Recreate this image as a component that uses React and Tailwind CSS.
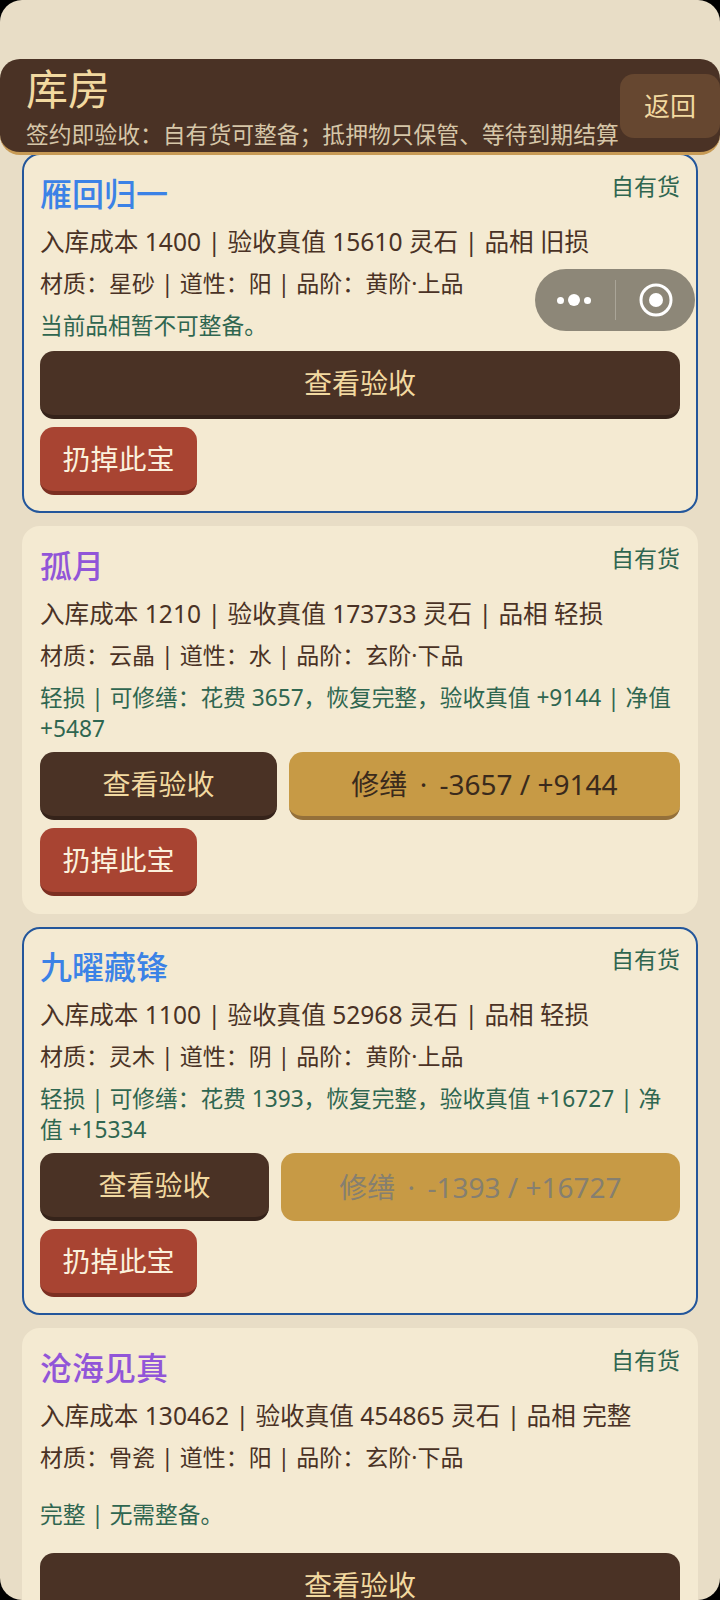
const FONT = "font-['Noto_Sans','Noto_Sans_CJK_SC',sans-serif]";

const items = [
  {
    name: "雁回归一",
    nameColor: "text-[#3b82e6]",
    selected: true,
    info: "入库成本 1400 | 验收真值 15610 灵石 | 品相 旧损",
    attrs: "材质：星砂 | 道性：阳 | 品阶：黄阶·上品",
    note: "当前品相暂不可整备。",
    noteBox: "min-h-[33px]",
  },
  {
    name: "孤月",
    nameColor: "text-[#9155d8]",
    info: "入库成本 1210 | 验收真值 173733 灵石 | 品相 轻损",
    attrs: "材质：云晶 | 道性：水 | 品阶：玄阶·下品",
    note: "轻损 | 可修缮：花费 3657，恢复完整，验收真值 +9144 | 净值 +5487",
    repair: "-3657 / +9144",
  },
  {
    name: "九曜藏锋",
    nameColor: "text-[#3b82e6]",
    selected: true,
    info: "入库成本 1100 | 验收真值 52968 灵石 | 品相 轻损",
    attrs: "材质：灵木 | 道性：阴 | 品阶：黄阶·上品",
    note: "轻损 | 可修缮：花费 1393，恢复完整，验收真值 +16727 | 净值 +15334",
    repair: "-1393 / +16727",
    repairDisabled: true,
  },
  {
    name: "沧海见真",
    nameColor: "text-[#9155d8]",
    info: "入库成本 130462 | 验收真值 454865 灵石 | 品相 完整",
    attrs: "材质：骨瓷 | 道性：阳 | 品阶：玄阶·下品",
    note: "完整 | 无需整备。",
    noteBox: "flex min-h-[61px] items-center",
    noDiscard: true,
  },
];

function ItemCard({ item }) {
  return (
    <div
      className={`rounded-[18px] border-2 bg-[#f4ead2] px-[16px] pt-[14px] pb-[16px] first:pt-[15px] ${
        item.selected ? "border-[#23569b]" : "border-[#f4ead2]"
      }`}
    >
      <div className="flex items-start justify-between">
        <div className={`text-[32px] font-medium leading-[48px] ${item.nameColor}`}>{item.name}</div>
        <div className="-mt-[2px] text-[23px] leading-[36px] text-[#2f6650]">自有货</div>
      </div>
      <div className="mt-[6px] text-[24.6px] leading-[36px] text-[#4a3225]">{item.info}</div>
      <div className="mt-[6px] text-[23px] leading-[34px] text-[#4a3225]">{item.attrs}</div>
      <div className={`mt-[10px] text-[22.7px] leading-[31px] text-[#2f6650] ${item.noteBox || ""}`}>
        {item.note}
      </div>
      <div className="mt-[8px] flex gap-[12px]">
        <button className="h-[68px] flex-auto whitespace-nowrap rounded-[14px] border-b-[4px] border-[#35231a] bg-[#4a3225] px-[16px] text-[28px] text-[#f2d9a0]">
          查看验收
        </button>
        {item.repair && (
          <button
            className={`h-[68px] flex-auto whitespace-nowrap rounded-[14px] bg-[#c79a45] px-[16px] text-[28px] ${
              item.repairDisabled
                ? "text-[#857f70]"
                : "border-b-[4px] border-[#94703a] text-[#3a2a1c]"
            }`}
          >
            修缮 <span className="mx-[5px]">·</span> {item.repair}
          </button>
        )}
      </div>
      {!item.noDiscard && (
        <button className="mt-[8px] block h-[68px] w-[157px] rounded-[14px] border-b-[4px] border-[#7c2f22] bg-[#a84432] text-[28px] text-[#fbf1dc]">
          扔掉此宝
        </button>
      )}
    </div>
  );
}

function Capsule() {
  return (
    <div className="absolute left-[535px] top-[269px] z-20 flex h-[62px] w-[160px] items-center rounded-full bg-[#8d8778]">
      <div className="flex w-[80px] items-center justify-center gap-[4px] pr-[3px]">
        <span className="h-[7px] w-[7px] rounded-full bg-white" />
        <span className="h-[12px] w-[12px] rounded-full bg-white" />
        <span className="h-[7px] w-[7px] rounded-full bg-white" />
      </div>
      <div className="h-[40px] w-px bg-[#aaa598]" />
      <div className="flex flex-1 items-center justify-center">
        <svg width="34" height="34" viewBox="0 0 34 34">
          <circle cx="17" cy="17" r="15" fill="none" stroke="#fff" strokeWidth="3" />
          <circle cx="17" cy="17" r="7" fill="#fff" />
        </svg>
      </div>
    </div>
  );
}

export default function App() {
  return (
    <div className="h-[1600px] bg-black">
      <div className={`relative h-[1600px] overflow-hidden rounded-[22px] bg-[#e8ddc6] pt-[59px] ${FONT}`}>
        <div className="relative z-10 flex h-[96px] justify-between rounded-[20px] border-b-[3px] border-[#c79a55] bg-[#4a3225] pl-[26px]">
          <div>
            <div className="text-[42px] leading-[60px] text-[#f2d9a0]">库房</div>
            <div className="whitespace-nowrap text-[22.8px] leading-[32px] text-[#d6c6a8]">
              签约即验收：自有货可整备；抵押物只保管、等待到期结算
            </div>
          </div>
          <button className="mt-[15px] h-[64px] w-[100px] rounded-[14px] bg-[#664730] text-[26px] text-[#f2d9a0]">
            返回
          </button>
        </div>
        <div className="-mt-[2px] flex flex-col gap-[13px] px-[22px]">
          {items.map((item) => (
            <ItemCard key={item.name} item={item} />
          ))}
        </div>
        <Capsule />
      </div>
    </div>
  );
}
